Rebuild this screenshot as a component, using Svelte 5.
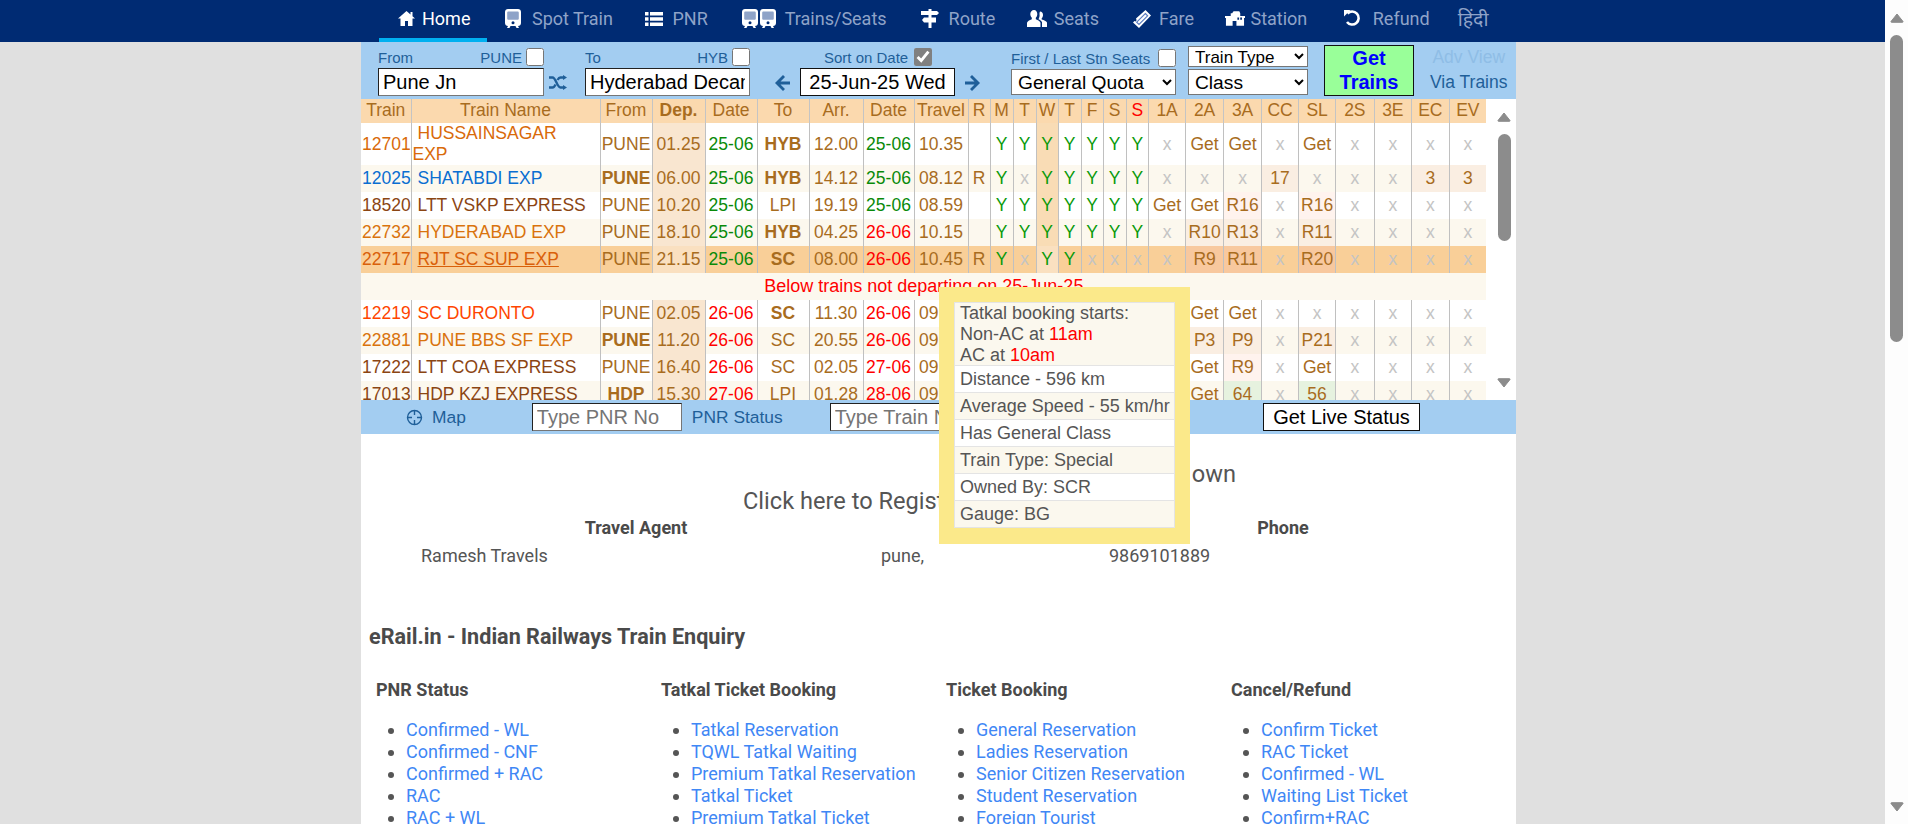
<script>
	const brown = "#8b4513";
	const rows = [
		{ no: "12701", name: "HUSSAINSAGAR EXP", color: "#d96a0a", from: "PUNE", dep: "01.25", d1: "25-06", to: "HYB", toB: true, arr: "12.00", d2: "25-06", tr: "10.35", r: "", days: "YYYYYYY", cl: ["x", "Get", "Get", "x", "Get", "x", "x", "x", "x"] },
		{ no: "12025", name: "SHATABDI EXP", color: "#0a6ed1", from: "PUNE", fromB: true, dep: "06.00", d1: "25-06", to: "HYB", toB: true, arr: "14.12", d2: "25-06", tr: "08.12", r: "R", days: "YxYYYYY", cl: ["x", "x", "x", "17", "x", "x", "x", "3", "3"] },
		{ no: "18520", name: "LTT VSKP EXPRESS", color: brown, from: "PUNE", dep: "10.20", d1: "25-06", to: "LPI", arr: "19.19", d2: "25-06", tr: "08.59", r: "", days: "YYYYYYY", cl: ["Get", "Get", "R16", "x", "R16", "x", "x", "x", "x"] },
		{ no: "22732", name: "HYDERABAD EXP", color: "#d9730d", from: "PUNE", dep: "18.10", d1: "25-06", to: "HYB", toB: true, arr: "04.25", d2: "26-06", tr: "10.15", r: "", days: "YYYYYYY", cl: ["x", "R10", "R13", "x", "R11", "x", "x", "x", "x"] },
		{ no: "22717", name: "RJT SC SUP EXP", color: "#d9600a", from: "PUNE", dep: "21.15", d1: "25-06", to: "SC", toB: true, arr: "08.00", d2: "26-06", tr: "10.45", r: "R", days: "YxYYxxx", cl: ["x", "R9", "R11", "x", "R20", "x", "x", "x", "x"], hover: true },
		{ msg: "Below trains not departing on 25-Jun-25" },
		{ no: "12219", name: "SC DURONTO", color: "#ff4500", from: "PUNE", dep: "02.05", d1: "26-06", to: "SC", toB: true, arr: "11.30", d2: "26-06", tr: "09.25", r: "", days: "xxYxxYx", cl: ["x", "Get", "Get", "x", "x", "x", "x", "x", "x"] },
		{ no: "22881", name: "PUNE BBS SF EXP", color: "#d9730d", from: "PUNE", fromB: true, dep: "11.20", d1: "26-06", to: "SC", arr: "20.55", d2: "26-06", tr: "09.35", r: "", days: "xxYxxxx", cl: ["x", "P3", "P9", "x", "P21", "x", "x", "x", "x"] },
		{ no: "17222", name: "LTT COA EXPRESS", color: brown, from: "PUNE", dep: "16.40", d1: "26-06", to: "SC", arr: "02.05", d2: "27-06", tr: "09.25", r: "", days: "xxYxxYx", cl: ["x", "Get", "R9", "x", "Get", "x", "x", "x", "x"] },
		{ no: "17013", name: "HDP KZJ EXPRESS", color: brown, from: "HDP", fromB: true, dep: "15.30", d1: "27-06", to: "LPI", arr: "01.28", d2: "28-06", tr: "09.58", r: "", days: "xxxYxxx", cl: ["x", "Get", "64", "x", "56", "x", "x", "x", "x"] }
	];

	const widths = [50, 189, 52, 53, 52, 52, 54, 51, 54, 22, 23, 23, 22, 23, 22, 23, 22.6, 37, 38, 38, 37, 37, 38.5, 37.5, 37.5, 37.5];
	const heads = ["Train", "Train Name", "From", "Dep.", "Date", "To", "Arr.", "Date", "Travel", "R", "M", "T", "W", "T", "F", "S", "S", "1A", "2A", "3A", "CC", "SL", "2S", "3E", "EC", "EV"];

	const today = new Set(["25-06"]);
	const availClass = v => {
		if (v === "x") return "none";
		if (v === "Get") return "";
		if (v === "64" || v === "56") return "ok";
		return "some";
	};

	const links = [
		{ title: "PNR Status", items: ["Confirmed - WL", "Confirmed - CNF", "Confirmed + RAC", "RAC", "RAC + WL"] },
		{ title: "Tatkal Ticket Booking", items: ["Tatkal Reservation", "TQWL Tatkal Waiting", "Premium Tatkal Reservation", "Tatkal Ticket", "Premium Tatkal Ticket"] },
		{ title: "Ticket Booking", items: ["General Reservation", "Ladies Reservation", "Senior Citizen Reservation", "Student Reservation", "Foreign Tourist"] },
		{ title: "Cancel/Refund", items: ["Confirm Ticket", "RAC Ticket", "Confirmed - WL", "Waiting List Ticket", "Confirm+RAC"] }
	];
</script>

{#snippet trainIcon()}
	<path d="M3 0h10c1.700 0 3 1.300 3 3v11c0 1.700-1.300 3-3 3H3c-1.700 0-3-1.300-3-3V3c0-1.700 1.300-3 3-3z" fill="#fff" />
	<path d="M3.500 2.500h9c.8 0 1.300.5 1.300 1.300v5.700c0 .8-.5 1.300-1.300 1.300h-9c-.8 0-1.300-.5-1.300-1.300V3.800c0-.8.5-1.300 1.300-1.300z" fill="#8ea3c8" />
	<circle cx="8" cy="13.800" r="1.500" fill="#002b73" />
	<path d="M3 17h2.500l-1 2H2zM10.500 17H13l1 2h-2.500z" fill="#fff" />
{/snippet}

{#snippet arrowUp()}
	<svg class="sb-arrow" viewBox="0 0 14 10"><path d="M7 1 13 8.500q.3.800-.6.800H1.600q-.9 0-.6-.8z" fill="#8c8c8c" stroke="#8c8c8c" stroke-linejoin="round" /></svg>
{/snippet}

{#snippet arrowDown()}
	<svg class="sb-arrow" viewBox="0 0 14 10"><path d="M7 9 13 1.500q.3-.8-.6-.8H1.600q-.9 0-.6.8z" fill="#8c8c8c" stroke="#8c8c8c" stroke-linejoin="round" /></svg>
{/snippet}

<div class="page">
	<div class="main">
		<nav class="nav">
			<a class="nav-item active" href="#home">
				<svg width="17" height="15" viewBox="0 0 17 15"><path d="M8.500 0 0 7.500h2.500V15H7v-5h3v5h4.500V7.500H17L14.500 5.300V1h-2v2.500z" fill="#fff" /></svg>
				Home
			</a>
			<a class="nav-item spot" href="#spot">
				<svg width="16" height="19" viewBox="0 0 16 19">{@render trainIcon()}</svg>
				Spot Train
			</a>
			<a class="nav-item" href="#pnr">
				<svg width="18" height="14" viewBox="0 0 18 14"><path d="M0 0h3.500v3.500H0zM5 0h13v3.500H5zM0 5.200h3.500v3.500H0zM5 5.200h13v3.500H5zM0 10.500h3.500V14H0zM5 10.500h13V14H5z" fill="#fff" /></svg>
				PNR
			</a>
			<a class="nav-item" href="#trains">
				<svg width="34" height="19" viewBox="0 0 34 19">
					{@render trainIcon()}
					<g transform="translate(18)">{@render trainIcon()}</g>
				</svg>
				Trains/Seats
			</a>
			<a class="nav-item route" href="#route">
				<svg width="18" height="19" viewBox="0 0 18 19"><path d="M7.500 0h3v2H16l2 2-2 2h-5.500v2.500H15v5h-4.500V19h-3v-5.500H3l-2-2.500 2-2.500h4.500V6H0V2h7.500z" fill="#fff" /></svg>
				Route
			</a>
			<a class="nav-item seats" href="#seats">
				<svg width="20" height="17" viewBox="0 0 20 17"><path d="M7 0c2 0 3.300 1.700 3.300 4 0 1.500-.6 3-1.500 3.800v1.500c2.400.8 4.200 2 4.700 3.500V17H0v-4.200c.5-1.500 2.300-2.700 4.800-3.500V7.800C4 7 3.300 5.500 3.300 4 3.300 1.700 5 0 7 0z" fill="#fff" /><path d="M13 1.500c1.800 0 3 1.500 3 3.500 0 1.300-.5 2.500-1.300 3.300v1.300c2.400.7 4.500 1.700 5.300 3V17h-5v-4.800c-.7-1.200-1.900-2.200-3.500-2.900.8-1.500 1.300-3.200 1-5.200-.1-1 .1-1.800.5-2.600z" fill="#fff" /></svg>
				Seats
			</a>
			<a class="nav-item fare" href="#fare">
				<svg width="18" height="18" viewBox="0 0 18 18"><path d="M12.500 0 18 5.500 6 18 0 12.500l1.500-1.500 1.500.5.500-1.500-.5-1.500z" fill="#fff" /><path d="M12.300 3.500 14.600 5.800 6 14.500 3.700 12.200z" fill="none" stroke="#5a7cc0" stroke-width="1.200" /></svg>
				Fare
			</a>
			<a class="nav-item station" href="#station">
				<svg width="20" height="15" viewBox="0 0 21 15"><path d="M0 5h6V2h1.500L9 0h6l1 2v3h5v2h-1v8h-8v-5H8v5H1V7H0z" fill="#fff" /><path d="M13 6.500h1.800v2.300H13zM16 6.500h1.800v2.300H16z" fill="#002b73" /></svg>
				Station
			</a>
			<a class="nav-item refund" href="#refund">
				<svg width="17" height="17" viewBox="0 0 17 17"><path d="M3.500 3.500A6.500 6.500 0 1 1 3 12" fill="none" stroke="#fff" stroke-width="2.600" /><path d="M0 0h6.500L0 6.500z" fill="#fff" /></svg>
				Refund
			</a>
			<a class="nav-item hindi" href="#hi">हिंदी</a>
		</nav>

		<div class="content">
			<div class="bar">
				<div class="group from">
					<div class="labels"><span>From</span><span class="right">PUNE <input type="checkbox" /></span></div>
					<input class="field" type="text" value="Pune Jn" />
				</div>
				<svg class="shuffle" width="18" height="15" viewBox="0 0 18 15"><path d="M0 2.500h3.500c3.500 0 4.500 10 8 10H15M0 12.500h3.500c1.300 0 2.300-1.300 3-3M8.500 5c.7-1.300 1.600-2.500 3-2.500H15" fill="none" stroke="#1f5f99" stroke-width="2.300" /><path d="M14 0l4 2.500-4 2.500zM14 10l4 2.500-4 2.500z" fill="#1f5f99" /></svg>
				<div class="group to">
					<div class="labels"><span>To</span><span class="right">HYB <input type="checkbox" /></span></div>
					<input class="field" type="text" value="Hyderabad Decan" />
				</div>
				<svg class="nav-arrow prev" width="15" height="16" viewBox="0 0 15 16"><path d="M8 0 0 8l8 8 2-2-4.500-4.500H15v-3H5.500L10 2z" fill="#1f5f99" /></svg>
				<div class="group date">
					<div class="labels sorted"><span>Sort on Date</span><input class="sort" type="checkbox" checked /></div>
					<input class="field dark center" type="text" value="25-Jun-25 Wed" />
				</div>
				<svg class="nav-arrow next" width="15" height="16" viewBox="0 0 15 16"><path d="M7 0l8 8-8 8-2-2 4.500-4.500H0v-3h9.500L5 2z" fill="#1f5f99" /></svg>
				<div class="group quota">
					<div class="labels"><span>First / Last Stn Seats</span><input type="checkbox" /></div>
					<select class="pick"><option>General Quota</option></select>
				</div>
				<div class="group types">
					<select class="pick small"><option>Train Type</option></select>
					<select class="pick"><option>Class</option></select>
				</div>
				<button class="get">Get Trains</button>
				<div class="group extra">
					<span class="adv">Adv View</span>
					<span class="via">Via Trains</span>
				</div>
			</div>

			<div class="results">
				<div class="scroller">
					<table>
						<colgroup>
							{#each widths as w}
								<col style="width: {w}px" />
							{/each}
						</colgroup>
						<thead>
							<tr>
								{#each heads as h, i}
									<th class:bold={h === "Dep."} class:sun={i === 16}>{h}</th>
								{/each}
							</tr>
						</thead>
						<tbody>
							{#each rows as row}
								{#if row.msg}
									<tr class="alt"><td class="msg" colspan="26">{row.msg}</td></tr>
								{:else}
									<tr class:hover={row.hover}>
										<td class="no" style="color: {row.color}">{row.no}</td>
										<td class="name" class:link={row.hover} style="color: {row.color}">{row.name}</td>
										<td class:bold={row.fromB}>{row.from}</td>
										<td class="dep">{row.dep}</td>
										<td class={today.has(row.d1) ? "good" : "bad"}>{row.d1}</td>
										<td class:bold={row.toB}>{row.to}</td>
										<td>{row.arr}</td>
										<td class={today.has(row.d2) ? "good" : "bad"}>{row.d2}</td>
										<td>{row.tr}</td>
										<td>{row.r}</td>
										{#each row.days.split("") as d, i}
											<td class={d === "Y" ? "yes" : "none"} class:wed={i === 2}>{d}</td>
										{/each}
										{#each row.cl as v}
											<td class={availClass(v)}>{v}</td>
										{/each}
									</tr>
								{/if}
							{/each}
						</tbody>
					</table>
				</div>
				<div class="inner-sb">
					{@render arrowUp()}
					<div class="thumb"></div>
					{@render arrowDown()}
				</div>
			</div>

			<div class="bottom">
				<svg class="map-icon" width="17" height="17" viewBox="0 0 17 17"><circle cx="8.500" cy="8.500" r="7" fill="none" stroke="#1f5f99" stroke-width="1.400" /><path d="M8.500 1v5M8.500 11v5M1 8.500h5M11 8.500h5" stroke="#1f5f99" stroke-width="1.400" /></svg>
				<span class="map">Map</span>
				<input class="field pnr" type="text" placeholder="Type PNR No" />
				<span class="status">PNR Status</span>
				<input class="field trainno" type="text" placeholder="Type Train No" />
				<button class="live">Get Live Status</button>
			</div>

			<div class="promo one">Agents of your own</div>
			<div class="promo two">Click here to Register as Agent</div>

			<div class="agents">
				<b class="ah">Travel Agent</b><b class="ah"></b><b class="ah">Phone</b>
				<span class="a1">Ramesh Travels</span><span class="a2">pune,</span><span>9869101889</span>
			</div>

			<h2>eRail.in - Indian Railways Train Enquiry</h2>

			<div class="links">
				{#each links as col}
					<div>
						<h3>{col.title}</h3>
						<ul>
							{#each col.items as item}
								<li><a href="#link">{item}</a></li>
							{/each}
						</ul>
					</div>
				{/each}
			</div>

			<div class="tip">
				<div class="tip-row">Tatkal booking starts:<br />Non-AC at <em>11am</em><br />AC at <em>10am</em></div>
				<div class="tip-row">Distance - 596 km</div>
				<div class="tip-row">Average Speed - 55 km/hr</div>
				<div class="tip-row">Has General Class</div>
				<div class="tip-row">Train Type: Special</div>
				<div class="tip-row">Owned By: SCR</div>
				<div class="tip-row">Gauge: BG</div>
			</div>
		</div>
	</div>

	<div class="page-sb">
		{@render arrowUp()}
		<div class="page-thumb"></div>
		{@render arrowDown()}
	</div>
</div>

<style>
	:global(body) {
		background: #e0e0e0;
		overflow: hidden;
	}

	.page {
		display: flex;
		height: 824px;
		overflow: hidden;
		font-family: "Liberation Sans", Arial, sans-serif;
	}

	.main {
		flex: 1;
		min-width: 0;
	}

	/* top nav */
	.nav {
		display: flex;
		height: 42px;
		padding-left: 379px;
		background: #002b73;
		font-family: Roboto, sans-serif;
		font-size: 18px;
	}

	.nav-item {
		display: flex;
		align-items: center;
		gap: 9px;
		padding: 0 16.500px 5px 17.500px;
		color: #8fa3c8;
		text-decoration: none;
		white-space: nowrap;
	}

	.nav-item.active {
		gap: 7px;
		padding-left: 19px;
		padding-right: 17px;
		color: #fff;
		border-bottom: 4px solid #00b0f0;
		padding-bottom: 1px;
	}

	.spot {
		gap: 11px;
		padding-right: 15px;
	}

	.route {
		gap: 10px;
		padding-right: 14px;
	}

	.seats {
		gap: 7px;
	}

	.fare {
		gap: 8px;
		padding-right: 14px;
	}

	.station {
		gap: 5px;
		padding-right: 19px;
	}

	.refund {
		gap: 12px;
		padding-right: 14px;
	}

	.hindi {
		font-family: "Noto Sans", sans-serif;
		font-size: 19.500px;
		padding-left: 14px;
	}

	.content {
		position: relative;
		width: 1155px;
		height: 782px;
		margin-left: 361px;
		background: #fff;
		color: #555;
		font-family: Roboto, sans-serif;
	}

	/* search bar */
	.bar {
		display: flex;
		align-items: flex-end;
		height: 57px;
		padding: 0 0 3px 17px;
		box-sizing: border-box;
		background: #a3cdf1;
		font-family: "Liberation Sans", Arial, sans-serif;
		font-size: 15px;
		color: #1f5f99;
	}

	.group {
		display: flex;
		flex-direction: column;
	}

	.labels {
		display: flex;
		align-items: center;
		justify-content: space-between;
		height: 18px;
		margin-bottom: 2px;
		white-space: nowrap;
	}

	.labels.sorted {
		justify-content: flex-start;
		gap: 6px;
		padding-left: 24px;
	}

	.right {
		display: flex;
		align-items: center;
		gap: 4px;
	}

	.labels input {
		width: 18px;
		height: 18px;
		margin: 0;
	}

	.sort {
		accent-color: #808080;
	}

	.from {
		width: 166px;
	}

	.shuffle {
		margin: 0 18px 6px 5px;
	}

	.to {
		width: 165px;
	}

	.prev {
		margin: 0 10px 5px 25px;
	}

	.next {
		margin: 0 31px 5px 10px;
	}

	.date {
		width: 155px;
	}

	.quota {
		width: 165px;
	}

	.types {
		width: 120px;
		margin-left: 12px;
		gap: 2px;
	}

	.quota .pick,
	.types .pick:last-child {
		margin-bottom: 1px;
	}

	.types .pick.small {
		margin-bottom: 0;
	}

	.field {
		box-sizing: border-box;
		width: 100%;
		height: 28px;
		padding: 0 4px;
		border: 1px solid #767676;
		border-top-color: #222;
		border-left-color: #222;
		background: #fff;
		color: #000;
		font-family: "Liberation Sans", Arial, sans-serif;
		font-size: 20px;
	}

	.field.dark {
		border-color: #111;
	}

	.center {
		text-align: center;
	}

	.pick {
		box-sizing: border-box;
		width: 100%;
		height: 26px;
		padding: 0 2px;
		border: 1px solid #767676;
		background: #fff;
		color: #000;
		font-family: "Liberation Sans", Arial, sans-serif;
		font-size: 19.200px;
	}

	.pick.small {
		height: 21px;
		font-size: 17px;
	}

	.get {
		width: 90px;
		height: 51px;
		margin-left: 16px;
		padding: 0 14px 3px;
		border: 1px solid #111;
		background: #99ff99;
		color: #0000ff;
		font-family: "Liberation Sans", Arial, sans-serif;
		font-size: 20px;
		font-weight: bold;
		line-height: 24px;
	}

	.extra {
		margin-left: 16px;
		align-items: center;
		font-size: 17.500px;
		gap: 4px;
		padding-bottom: 3px;
	}

	.adv {
		color: #8fbde6;
	}

	/* results table */
	.results {
		display: flex;
		height: 301px;
		overflow: hidden;
		font-family: "Liberation Sans", Arial, sans-serif;
	}

	.scroller {
		width: 1125px;
		overflow: hidden;
	}

	table {
		width: 1125px;
		table-layout: fixed;
		border-collapse: collapse;
		font-size: 17.500px;
		line-height: 21px;
		color: #a86c1e;
	}

	th {
		height: 24px;
		padding: 0 0 1px;
		box-sizing: border-box;
		background: #fbd9ae;
		border-right: 1px solid #c4c4c4;
		font-weight: normal;
		text-align: center;
	}

	td {
		height: 27px;
		padding: 0;
		border-right: 1px solid #c0c0c0;
		text-align: center;
		white-space: nowrap;
		overflow: hidden;
	}

	tbody tr:nth-child(even) td {
		background: #fcf8ee;
	}

	tbody tr.hover td {
		background: #f9cf98;
	}

	th.bold,
	td.bold {
		font-weight: bold;
	}

	th.sun {
		color: #ff0000;
	}

	td.no {
		text-align: left;
		padding-left: 1px;
	}

	td.name {
		text-align: left;
		padding: 0 8px 0 1px;
		text-indent: 5px;
		white-space: normal;
	}

	td.link {
		text-decoration: underline;
	}

	tbody tr td.dep {
		background: #f9e6d0;
	}

	tbody tr td.wed {
		background: #f9dcb5;
	}

	tr.hover td.dep,
	tr.hover td.wed {
		background: #fae0c0;
	}

	.good {
		color: #098a09;
	}

	.bad {
		color: #ff0000;
	}

	.yes {
		color: #0a9a0a;
	}

	.none {
		color: #c4c4c4;
	}

	tbody tr td.some {
		background: #fff3ee;
	}

	tbody tr:nth-child(even) td.some {
		background: #faeee2;
	}

	tbody tr.hover td.some {
		background: #f8c89e;
	}

	tbody tr td.ok {
		background: #e6f2df;
	}

	td.msg {
		background: #fcf8ee;
		color: #ff0000;
		border-right: 0;
		font-size: 18px;
	}

	.inner-sb {
		flex: 1;
		display: flex;
		flex-direction: column;
		align-items: center;
		padding: 13px 5px 12px 11px;
		box-sizing: border-box;
	}

	.sb-arrow {
		flex: none;
		width: 14px;
		height: 10px;
	}

	.thumb {
		width: 13px;
		height: 107px;
		margin: 12px 0 auto;
		border-radius: 7px;
		background: #8c8c8c;
	}

	.page-sb {
		display: flex;
		flex: none;
		flex-direction: column;
		align-items: center;
		width: 23px;
		padding: 13px 0 12px;
		box-sizing: border-box;
		background: #fdfdfd;
	}

	.page-thumb {
		width: 13px;
		height: 307px;
		margin: 12px 0 auto;
		border-radius: 7px;
		background: #8c8c8c;
	}

	/* status bar */
	.bottom {
		display: flex;
		align-items: center;
		height: 34px;
		padding-left: 45px;
		background: #a3cdf1;
		color: #1f5f99;
		font-family: "Liberation Sans", Arial, sans-serif;
		font-size: 17.400px;
	}

	.map {
		margin-left: 9px;
	}

	.pnr {
		width: 150px;
		margin-left: 66px;
	}

	.status {
		margin-left: 10px;
	}

	.trainno {
		width: 150px;
		margin-left: 47px;
	}

	.live {
		height: 28px;
		margin-left: auto;
		margin-right: 96px;
		width: 157px;
		padding: 0;
		border: 1px solid #111;
		background: #fff;
		color: #000;
		font-family: "Liberation Sans", Arial, sans-serif;
		font-size: 20px;
	}

	/* agents */
	.promo {
		font-size: 23.600px;
		line-height: 27px;
		white-space: nowrap;
	}

	.promo.one {
		margin-top: 27px;
		text-align: right;
		padding-right: 280px;
	}

	.promo.two {
		padding-left: 382px;
	}

	.agents {
		display: grid;
		grid-template-columns: 450px 248px 348px;
		grid-auto-rows: 28px;
		align-items: center;
		margin: -2px 0 0 50px;
		font-size: 18px;
	}

	.ah {
		text-align: center;
		color: #4a4a4a;
	}

	.a1 {
		padding-left: 10px;
	}

	.a2 {
		padding-left: 20px;
	}

	h2 {
		margin: 54px 0 0 8px;
		font-size: 21.600px;
		line-height: 27px;
		color: #4a4a4a;
	}

	.links {
		display: grid;
		grid-template-columns: repeat(4, 285px);
		margin: 29px 0 0 15px;
	}

	h3 {
		margin: 0 0 18px;
		font-size: 18px;
		line-height: 22px;
		color: #4a4a4a;
	}

	ul {
		margin: 0;
		padding-left: 30px;
		font-size: 18px;
		line-height: 22px;
	}

	li a {
		color: #3f87f5;
		text-decoration: none;
	}

	/* train tooltip */
	.tip {
		position: absolute;
		top: 245px;
		left: 578px;
		box-sizing: border-box;
		width: 251px;
		height: 257px;
		padding: 15px;
		background: #fbe98a;
		color: #555;
		font-family: "Liberation Sans", Arial, sans-serif;
		font-size: 18px;
		line-height: 21px;
	}

	.tip-row {
		padding: 2.500px 5px;
		background: #fff;
		border: 1px solid #e4e4e4;
		margin-top: -1px;
		white-space: nowrap;
	}

	.tip-row:first-child {
		box-sizing: border-box;
		height: 64px;
		padding: 0 5px;
		margin-top: 0;
	}

	.tip-row:nth-child(odd) {
		background: #fbf8ee;
	}

	.tip em {
		color: #ff0000;
		font-style: normal;
	}
</style>
